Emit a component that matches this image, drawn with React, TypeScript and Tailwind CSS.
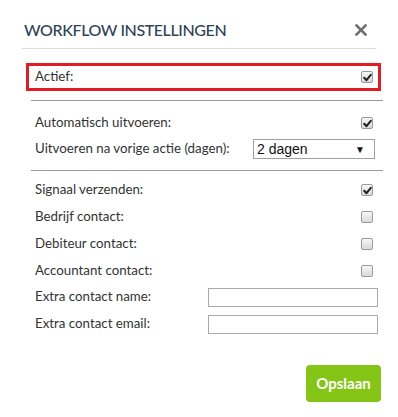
import React from 'react';

const Check = ({ checked }: { checked: boolean }) => (
  <div className="w-[12px] h-[12px] rounded-[2px] border border-[#9a9a9a] bg-gradient-to-b from-[#f7f7f7] to-[#d9d9d9] flex items-center justify-center">
    {checked && (
      <svg width="9" height="9" viewBox="0 0 9 9">
        <path d="M1.2 4.8 L3.5 7.2 L7.8 1.8" fill="none" stroke="#222" strokeWidth="2" strokeLinecap="round" strokeLinejoin="round" />
      </svg>
    )}
  </div>
);

const CheckRow = ({ label, checked }: { label: string; checked: boolean }) => (
  <div className="flex items-center justify-between h-[26.75px] pl-[8px] pr-[10px]">
    <span>{label}</span>
    <Check checked={checked} />
  </div>
);

const InputRow = ({ label }: { label: string }) => (
  <div className="flex items-center justify-between h-[26.75px] pl-[8px] pr-[5px]">
    <span>{label}</span>
    <div className="w-[170px] h-[19px] border border-[#a9a9a9] bg-white" />
  </div>
);

export default function App() {
  return (
    <div className="w-[398px] h-[417px] bg-white text-[#333] text-[13.3px] font-['Lato',_sans-serif]">
      {/* kop */}
      <div className="mx-[22px] h-[49px] pt-[12px] border-b border-[#dcdcdc] flex items-center justify-between">
        <h1 className="pl-[2px] text-[16px] leading-[24px] text-[#2f4257] tracking-[-0.4px] font-medium">WORKFLOW INSTELLINGEN</h1>
        <svg width="12" height="12" viewBox="0 0 12 12" className="mr-[9px]">
          <path d="M1.5 1.5 L10.5 10.5 M10.5 1.5 L1.5 10.5" stroke="#707070" strokeWidth="2.6" strokeLinecap="square" />
        </svg>
      </div>

      <div className="ml-[26px] w-[357px]">
        {/* actief, rood gemarkeerd */}
        <div className="mt-[14px] w-[355px] h-[28px] border-[3px] border-[#e31b23] flex items-center justify-between pl-[6px] pr-[5px]">
          <span>Actief:</span>
          <Check checked />
        </div>
        <div className="mt-[9px] ml-[5px] w-[352px] h-px bg-[#9a9a9a]" />

        <div className="mt-[9px] pl-[1px]">
          <div className="flex items-center justify-between h-[26px] pl-[8px] pr-[10px]">
            <span>Automatisch uitvoeren:</span>
            <Check checked />
          </div>
          <div className="flex items-center justify-between h-[26px] pl-[8px] pr-[8px]">
            <span>Uitvoeren na vorige actie (dagen):</span>
            <div className="w-[122px] h-[20px] border border-[#a0a0a0] flex items-center justify-between pl-[3px] pr-[9px] font-['Liberation_Sans',_sans-serif] text-[14px] text-[#111]">
              <span>2 dagen</span>
              <span className="text-[10px]">▼</span>
            </div>
          </div>
        </div>
        <div className="mt-[8px] ml-[5px] w-[352px] h-px bg-[#9a9a9a]" />

        <div className="mt-[6px] pl-[1px]">
          <CheckRow label="Signaal verzenden:" checked />
          <CheckRow label="Bedrijf contact:" checked={false} />
          <CheckRow label="Debiteur contact:" checked={false} />
          <CheckRow label="Accountant contact:" checked={false} />
          <InputRow label="Extra contact name:" />
          <InputRow label="Extra contact email:" />
        </div>

        <div className="flex justify-end mt-[27px] pr-[2px]">
          <button className="w-[75px] h-[37px] rounded-[4px] bg-[#84c516] text-white text-[15px] font-bold">Opslaan</button>
        </div>
      </div>
    </div>
  );
}
